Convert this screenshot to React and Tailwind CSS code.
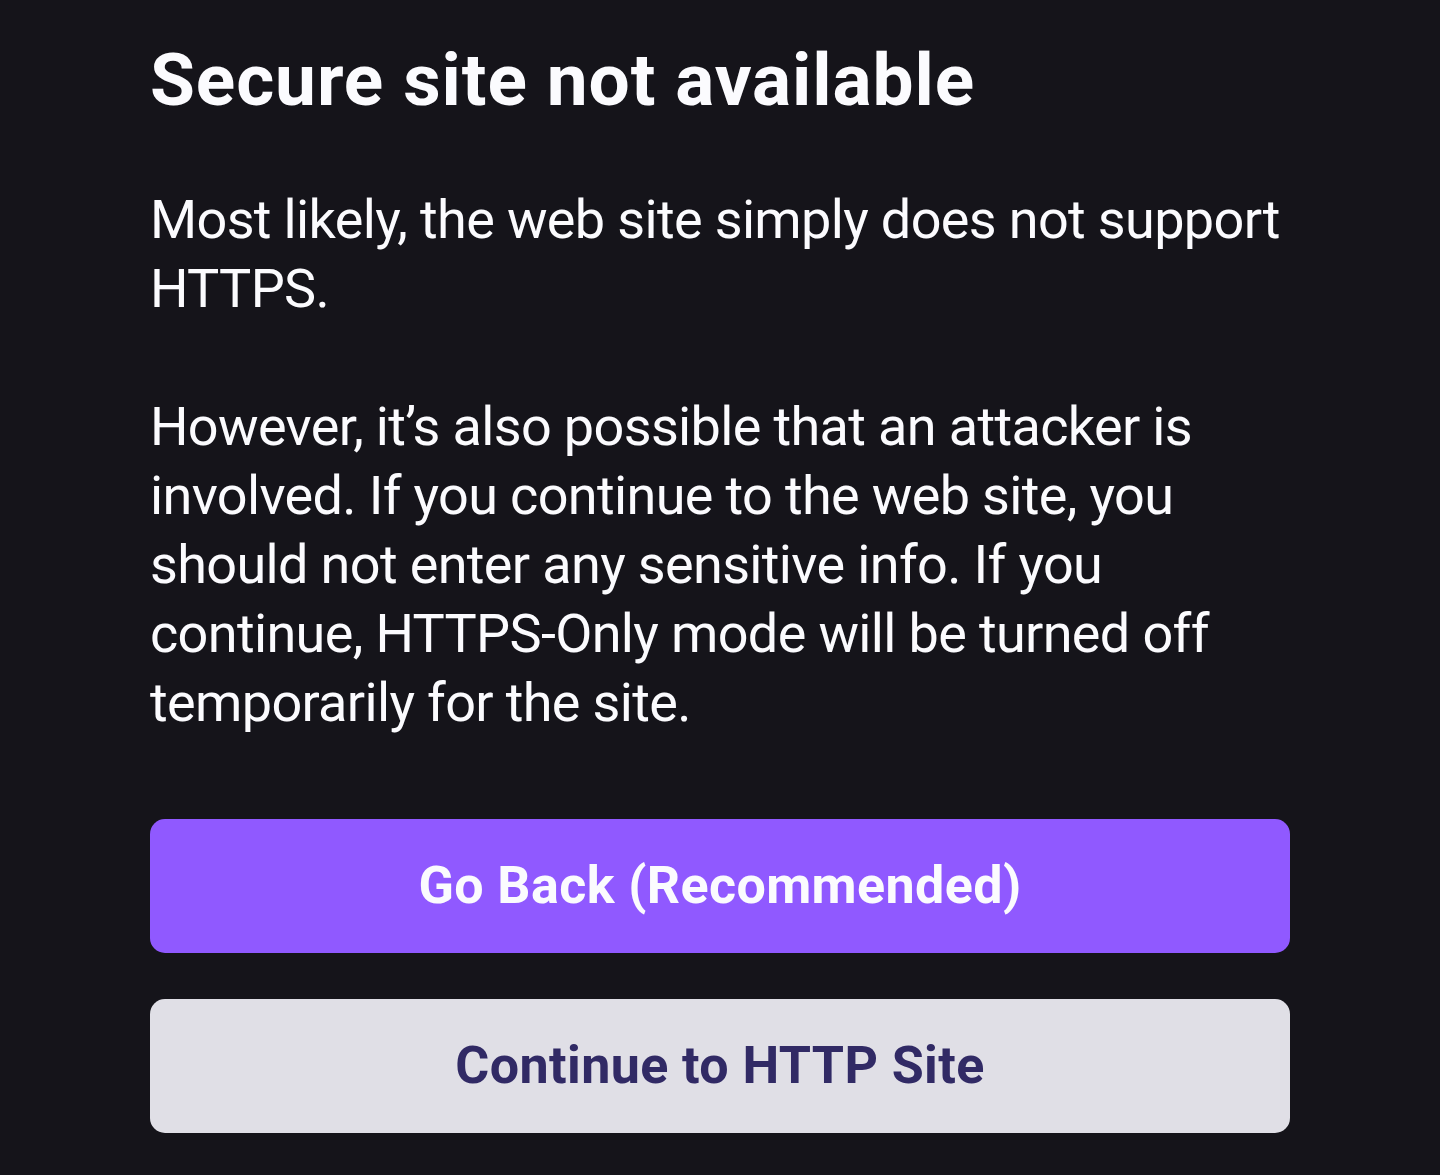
export default function App() {
  return (
    <div className="min-h-[1175px] w-full bg-[#15141a] px-[150px] pt-[37px] font-['Roboto',sans-serif]">
      <h1 className="text-[73px] font-bold leading-[86px] tracking-[0.9px] text-[#fbfbfe]">Secure site not available</h1>
      <div className="mt-[62px] text-[54px] leading-[69px] tracking-[-0.65px] text-[#fbfbfe]">
        <p>Most likely, the web site simply does not support HTTPS.</p>
        <p className="mt-[69px]">
          However, it’s also possible that an attacker is involved. If you continue to the web site, you should not enter any sensitive info. If you continue, HTTPS-Only mode will be turned off temporarily for the site.
        </p>
      </div>
      <div className="mt-[82px] flex flex-col gap-[46px]">
        <button className="flex h-[134px] w-full items-center justify-center rounded-[15px] bg-[#9059ff] text-[52px] font-bold tracking-[0.4px] text-[#fbfbfe]">
          Go Back (Recommended)
        </button>
        <button className="flex h-[134px] w-full items-center justify-center rounded-[15px] bg-[#e0dfe6] text-[52px] font-bold tracking-[0.4px] text-[#312a65]">
          Continue to HTTP Site
        </button>
      </div>
    </div>
  );
}
